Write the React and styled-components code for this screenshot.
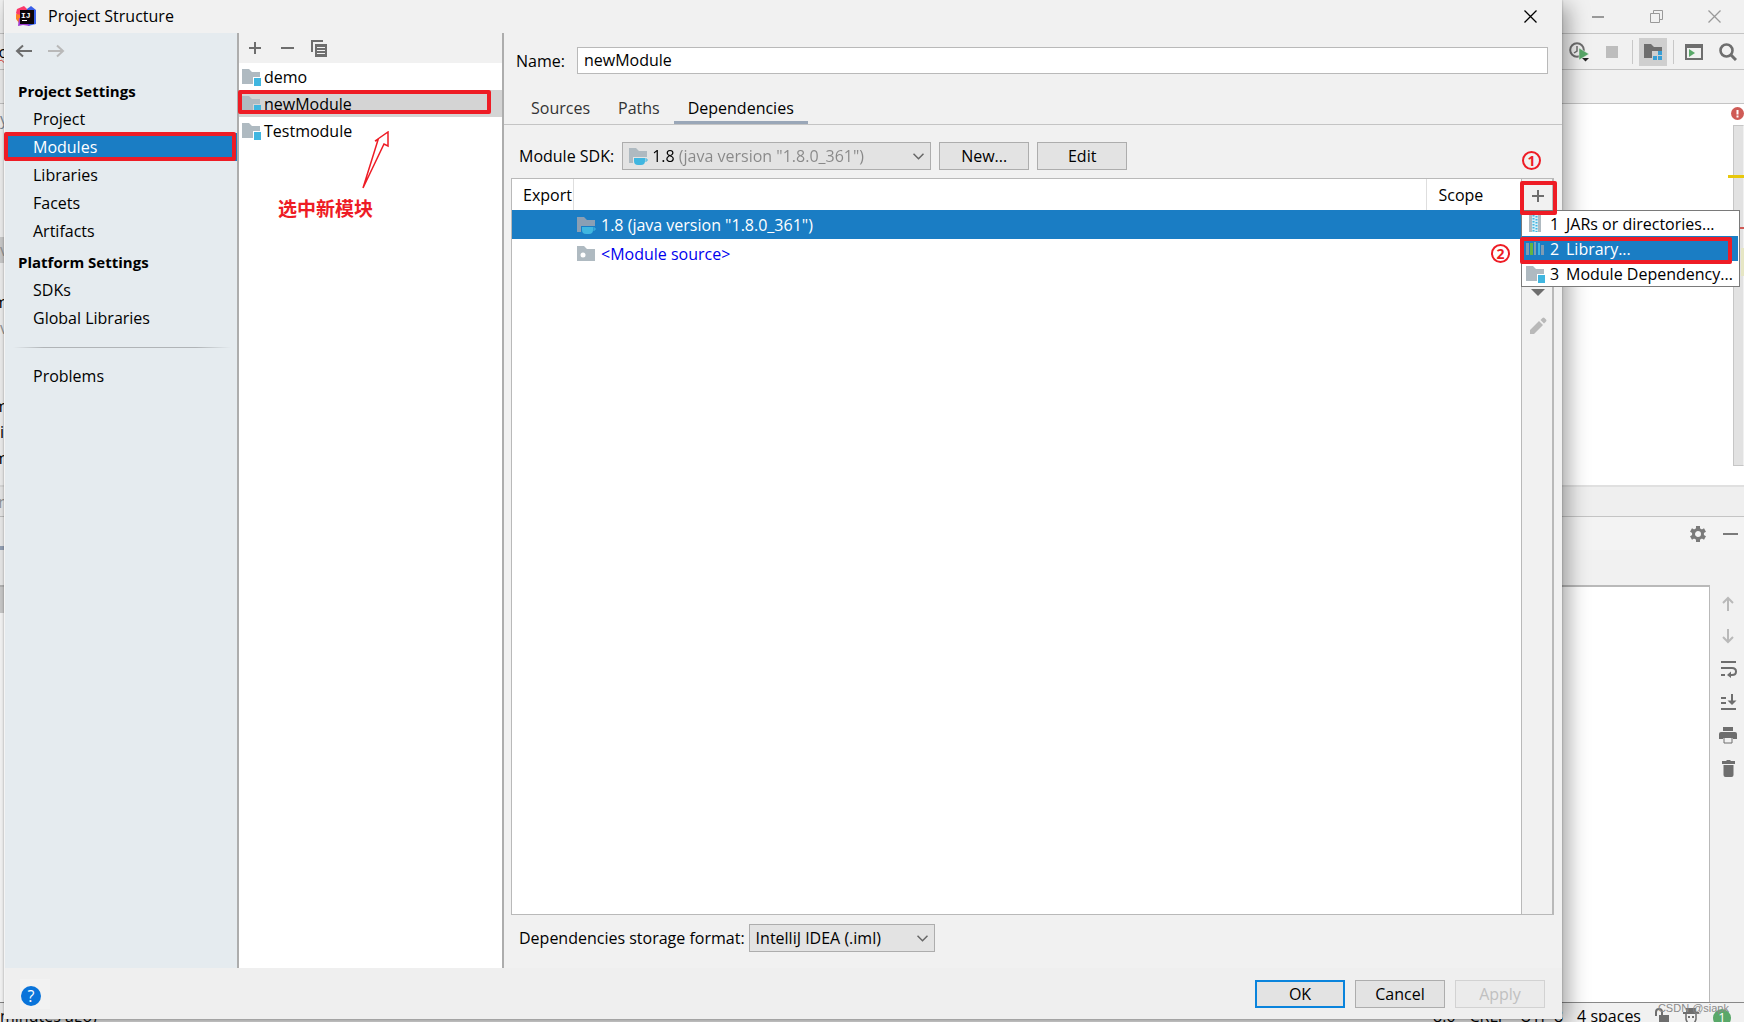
import React from "react";
import styled, { createGlobalStyle, css } from "styled-components";

const GlobalStyle = createGlobalStyle`
  * { box-sizing: border-box; }
  body {
    margin: 0;
    overflow: hidden;
    background: #f1f1f1;
    color: #000;
    font: 16px/24px "Open Sans", "Noto Sans CJK SC", sans-serif;
  }
  button, input, select { font: inherit; color: inherit; }
  ul { list-style: none; margin: 0; padding: 0; }
  svg { display: block; flex: none; }
`;

const Red = "#ee1c25";

/* ---------- IDE window behind the dialog ---------- */

const Screen = styled.div`
  position: relative;
  height: 100vh;
  overflow: hidden;
`;

const Ide = styled.div`
  display: flex;
  flex-direction: column;
  height: 100%;
`;

const Band = styled.div`
  flex: none;
  display: flex;
  align-items: center;
  justify-content: space-between;
  height: ${(p) => p.$h}px;
  background: ${(p) => p.$bg || "#f1f1f1"};
  border-bottom: ${(p) => p.$line || "1px solid #c4c4c4"};
`;

const Cluster = styled.div`
  display: flex;
  align-items: center;
  gap: ${(p) => p.$gap}px;
  padding-right: ${(p) => p.$pr}px;
`;

const Sliver = styled.span`
  display: flex;
  justify-content: ${(p) => (p.$end ? "flex-end" : "flex-start")};
  width: 8px;
  overflow: hidden;
  white-space: nowrap;
  color: ${(p) => p.$color || "#000"};
  text-decoration: ${(p) => (p.$wavy ? "underline wavy #e53935 1px" : "none")};
`;

const ToolTab = styled.span`
  align-self: stretch;
  width: 60px;
  border-bottom: 4px solid #9aa7bb;
`;

const IconButton = styled.button`
  display: flex;
  align-items: center;
  justify-content: center;
  width: ${(p) => p.$w || 20}px;
  height: ${(p) => p.$h || 20}px;
  padding: 0;
  border: 0;
  background: ${(p) => (p.$active ? "#cfcfcf" : "transparent")};
`;

const Divider = styled.span`
  width: 1px;
  height: 24px;
  background: #c8c8c8;
`;

const Editor = styled.div`
  flex: none;
  display: flex;
  justify-content: space-between;
  height: 383px;
  background: #fff;
  border-bottom: 2px solid #e0e0e0;
`;

const Tree = styled.ul`
  width: 200px;
  background: #f6f6f6;
`;

const TreeRow = styled.li`
  height: ${(p) => p.$h || 26}px;
  display: flex;
  align-items: center;
  background: ${(p) => (p.$selected ? "#d0d0d0" : "transparent")};
`;

const Gutter = styled.div`
  position: relative;
  display: flex;
  flex-direction: column;
  align-items: center;
  gap: 5px;
  width: 14px;
  padding-top: 3px;
`;

const Track = styled.div`
  align-self: stretch;
  height: 341px;
  margin: 0 0 0 3px;
  border: 1px solid #c6c6c6;
  border-right-color: #f1f1f1;
  background: #e2e2e2;
`;

const Mark = styled.span`
  position: absolute;
  right: 0;
  top: ${(p) => p.$top}px;
  width: ${(p) => p.$w}px;
  height: ${(p) => p.$h}px;
  background: ${(p) => p.$color};
`;

const Console = styled.div`
  flex: 1;
  display: flex;
  min-height: 0;
  border-bottom: 1px solid #888;
`;

const ConsolePane = styled.div`
  flex: 1;
  border: solid #b9b9b9;
  border-width: 2px 1px 0 0;
  background: #fff;
`;

const ConsoleTree = styled.div`
  width: 200px;
  height: 26px;
  background: #d0d0d0;
`;

const ConsoleTools = styled.div`
  display: flex;
  flex-direction: column;
  align-items: center;
  gap: 13px;
  width: 34px;
  padding: 8px 0 0 2px;
`;

const StatusBar = styled.footer`
  flex: none;
  display: flex;
  align-items: flex-start;
  justify-content: space-between;
  height: 19px;
  line-height: 26px;
`;

const StatusItems = styled.div`
  display: flex;
  gap: 14px;
  padding-right: 13px;
`;

const StatusText = styled.span`
  white-space: nowrap;
`;

const StatusIcon = styled.span`
  padding-top: 5px;
`;

const EventBadge = styled.span`
  width: 18px;
  height: 18px;
  margin-top: 6px;
  border-radius: 9px;
  background: #59a869;
  color: #fff;
  font-size: 13px;
  line-height: 16px;
  text-align: center;
`;

const Watermark = styled.span`
  position: absolute;
  right: 15px;
  bottom: 5px;
  color: #8b8b8b;
  font: 11px/18px "Liberation Sans", sans-serif;
`;

/* ---------- dialog ---------- */

const Dialog = styled.section`
  position: absolute;
  inset: 0 182px 3px 4px;
  display: flex;
  flex-direction: column;
  background: #f1f1f1;
  border-left: 1px solid #f4f4f4;
  box-shadow: 6px 6px 20px rgba(0, 0, 0, 0.36), 0 0 2px rgba(0, 0, 0, 0.3);
`;

const TitleBar = styled.header`
  flex: none;
  display: flex;
  align-items: center;
  gap: 11px;
  height: 33px;
  padding: 0 22px 1px 11px;
`;

const Title = styled.h1`
  flex: 1;
  margin: 0;
  font-size: 16px;
  font-weight: 400;
`;

const Body = styled.div`
  flex: 1;
  display: flex;
  min-height: 0;
`;

const Sidebar = styled.nav`
  flex: none;
  width: 234px;
  border-right: 2px solid #adadad;
  background: #e5ebef;
`;

const History = styled.div`
  display: flex;
  gap: 12px;
  height: 46px;
  padding: 8px 0 0 9px;
`;

const GroupTitle = styled.h2`
  height: 26px;
  margin: ${(p) => (p.$spaced ? 5 : 0)}px 0 0;
  padding-left: 13px;
  font-size: 15px;
  line-height: 24px;
  font-weight: 700;
`;

const NavItem = styled.li`
  position: relative;
  height: 28px;
`;

const NavLink = styled.a`
  display: block;
  padding-left: 28px;
  line-height: 28px;
  color: ${(p) => (p.$selected ? "#fff" : "#000")};
  background: ${(p) => (p.$selected ? "#1a7dc4" : "transparent")};
  text-decoration: none;
`;

const Rule = styled.hr`
  height: 1px;
  margin: 15px 6px 14px 8px;
  border: 0;
  background: linear-gradient(90deg, transparent, #b0b4b7 14%, #b0b4b7 84%, transparent);
`;

const Highlight = styled.span`
  position: absolute;
  z-index: 3;
  top: ${(p) => p.$t}px;
  right: ${(p) => p.$r}px;
  bottom: ${(p) => p.$b}px;
  left: ${(p) => p.$l}px;
  border: 4px solid ${Red};
  border-radius: 2px;
  pointer-events: none;
`;

const Modules = styled.div`
  position: relative;
  flex: none;
  width: 265px;
  border-right: 2px solid #adadad;
  background: #fff;
`;

const ModuleTools = styled.div`
  display: flex;
  gap: 12px;
  height: 30px;
  padding: 5px 0 0 6px;
  background: #f1f1f1;
`;

const ModuleRow = styled.li`
  position: relative;
  display: flex;
  align-items: center;
  gap: 2px;
  height: 27px;
  padding-left: 3px;
  background: ${(p) => (p.$selected ? "#d4d4d4" : "transparent")};
`;

const Note = styled.div`
  position: absolute;
  top: 98px;
  left: 39px;
  color: ${Red};
  font: 700 19px/28px "Noto Sans CJK SC", sans-serif;
`;

const NoteArrow = styled.svg`
  margin: 0 0 3px 83px;
`;

const Detail = styled.div`
  flex: 1;
  display: flex;
  flex-direction: column;
  min-width: 0;
`;

const NameRow = styled.div`
  display: flex;
  align-items: center;
  gap: 12px;
  padding: 14px 14px 0 12px;
`;

const TextBox = styled.input`
  flex: 1;
  min-width: 0;
  height: 27px;
  padding: 0 6px 2px;
  border: 1px solid #b9b9b9;
  background: #fff;
`;

const Tabs = styled.div`
  display: flex;
  height: 51px;
  padding: 18px 13px 0;
  border-bottom: 1px solid #c4c4c4;
`;

const Tab = styled.button`
  height: 32px;
  padding: 0 14px 1px;
  border: 0;
  background: none;
  color: ${(p) => (p.$active ? "#000" : "#333")};
  ${(p) => p.$active && css`box-shadow: inset 0 -3px #9aa7b8;`}
`;

const Row = styled.div`
  display: flex;
  align-items: center;
  gap: ${(p) => p.$gap}px;
  padding: ${(p) => p.$pad};
`;

const Combo = styled.span`
  position: relative;
  display: flex;
  align-items: center;
  gap: 3px;
  width: ${(p) => p.$w}px;
  height: 28px;
  padding: 0 6px;
  border: 1px solid #adadad;
  background: #e3e3e3;
`;

const ComboSelect = styled.select`
  appearance: none;
  flex: 1;
  min-width: 0;
  padding: 0;
  border: 0;
  background: transparent;
  ${(p) =>
    p.$twoTone &&
    css`
      color: transparent;
      background: linear-gradient(90deg, #000 24px, #888 24px);
      background-clip: text;
    `}
`;

const PushButton = styled.button`
  width: 90px;
  height: 28px;
  padding: 0;
  line-height: 24px;
  border: ${(p) => (p.$primary ? "2px solid #0a84dc" : "1px solid #adadad")};
  background: #e3e3e3;
  &:disabled {
    border-color: #d2d2d2;
    background: #ebebeb;
    color: #c0c0c0;
  }
`;

const Panel = styled.div`
  flex: 1;
  display: flex;
  min-height: 0;
  margin: 8px 8px 0 7px;
  border: 1px solid #b9b9b9;
  border-right-width: 2px;
  background: #fff;
`;

const TableArea = styled.div`
  position: relative;
  flex: 1;
`;

const Table = styled.table`
  width: 100%;
  border-collapse: collapse;
  table-layout: fixed;
`;

const Th = styled.th`
  width: ${(p) => p.$w};
  height: 31px;
  padding: 0 0 0 ${(p) => p.$pl || 0}px;
  border-right: ${(p) => (p.$last ? "0" : "1px solid #dedede")};
  font-weight: 400;
  text-align: left;
  white-space: nowrap;
`;

const Tr = styled.tr`
  height: 29px;
  color: ${(p) => (p.$selected ? "#fff" : "#0000ee")};
  background: ${(p) => (p.$selected ? "#1a7dc4" : "transparent")};
`;

const Td = styled.td`
  padding: 0 0 0 4px;
`;

const Entry = styled.span`
  display: flex;
  align-items: center;
  gap: 4px;
`;

const PanelTools = styled.div`
  position: relative;
  display: flex;
  flex-direction: column;
  align-items: center;
  width: 31px;
  border-left: 1px solid #b9b9b9;
  background: #f1f1f1;
`;

const ToolSlot = styled.div`
  position: relative;
  display: flex;
  align-items: ${(p) => p.$align || "center"};
  justify-content: center;
  width: 31px;
  height: ${(p) => p.$h}px;
  padding-left: 2px;
`;

const Popup = styled.ul`
  position: absolute;
  z-index: 2;
  top: 31px;
  left: -1px;
  width: 219px;
  border: 1px solid #7a7a7a;
  background: #fff;
`;

const PopupItem = styled.li`
  position: relative;
  height: 25px;
`;

const PopupAction = styled.button`
  display: flex;
  align-items: center;
  gap: 6px;
  width: 216px;
  height: 25px;
  padding: 0 0 0 4px;
  border: 0;
  text-align: left;
  white-space: nowrap;
  color: ${(p) => (p.$selected ? "#fff" : "#000")};
  background: ${(p) => (p.$selected ? "#1a7dc4" : "transparent")};
`;

const PopupIcon = styled.span`
  width: 18px;
`;

const Digit = styled.span`
  width: 10px;
`;

const Step = styled.span`
  position: absolute;
  z-index: 3;
  top: ${(p) => p.$top}px;
  right: ${(p) => p.$right}px;
  width: 19px;
  height: 19px;
  border: 2px solid ${Red};
  border-radius: 10px;
  color: ${Red};
  font-size: 14px;
  font-weight: 700;
  line-height: 15px;
  text-align: center;
`;

const DialogFooter = styled.footer`
  flex: none;
  display: flex;
  align-items: center;
  gap: 10px;
  height: 51px;
  padding: 0 17px 0 15px;
  background: #efefef;
`;

const HelpButton = styled.button`
  display: flex;
  align-items: center;
  width: 30px;
  height: 30px;
  margin: 0 auto 0 0;
  padding: 0;
  border: 0;
  background: #f2f2f2;
`;

const HelpMark = styled.span`
  width: 20px;
  height: 20px;
  margin: 4px 0 0 1px;
  border-radius: 10px;
  background: #0a74da;
  color: #fff;
  line-height: 20px;
  text-align: center;
`;

/* ---------- icons ---------- */

const Logo = () => (
  <svg width="21" height="21" viewBox="0 0 21 21">
    <path d="M1 3 8 0l4 4-3 9-6 4-2-4 1-3-2-3z" fill="#fb3a6a" />
    <path d="m0 8 5 1 1 7-3 1-3-4z" fill="#fd8224" />
    <path d="m11 3 4-3 5 4v14l-8 2-2-8z" fill="#3a5fe8" />
    <path d="m3 12 6 2 5 6-7-1-5 1z" fill="#a03ad0" />
    <rect x="4" y="4" width="14" height="14" fill="#0b0408" />
    <rect x="6" y="14" width="5" height="1" fill="#fff" />
    <text x="5" y="12" fill="#fff" fontSize="8" fontWeight="700" fontFamily="Liberation Mono, monospace">IJ</text>
  </svg>
);

const Arrow = ({ right, color }) => (
  <svg width="18" height="20" viewBox="0 0 18 20" fill="none" stroke={color} strokeWidth="2">
    {right ? <path d="M1 10h15M10 4.500l6 5.500-6 5.500" /> : <path d="M17 10H2M8 4.500L2 10l6 5.500" />}
  </svg>
);

const Plus = () => (
  <svg width="14" height="14" viewBox="0 0 14 14" stroke="#6e6e6e" strokeWidth="2"><path d="M7 1v12M1 7h12" /></svg>
);

const Minus = ({ w = 13, color = "#6e6e6e" }) => (
  <svg width={w} height="2"><rect width={w} height="2" fill={color} /></svg>
);

const Copy = () => (
  <svg width="16" height="17" viewBox="0 0 16 17">
    <path d="M1 12V1h11" fill="none" stroke="#6e6e6e" strokeWidth="2" />
    <path d="M4 4h12v13H4z" fill="#6e6e6e" />
    <path d="M6 7.500h8M6 10.500h8M6 13.500h8" stroke="#f1f1f1" />
  </svg>
);

const Folder = ({ kind, fill = "#afbac1", gap = "#fff" }) => (
  <svg width="20" height="18" viewBox="0 0 20 18">
    <path d="M0 1h7l3 3h8v12H0z" fill={fill} />
    {kind === "module" && <><path d="M11 9h8v8h-8z" fill={gap} /><path d="M12 10h7v8h-7z" fill="#40b6e0" /></>}
    {kind === "sdk" && <>
      <path d="M4 10h15v6H4z" fill={gap} />
      <path d="M5 11h11v3q0 4-4 4H9q-4 0-4-4z" fill="#40b6e0" />
      <path d="M15 12h3v2h-3" fill="none" stroke="#40b6e0" />
    </>}
    {kind === "source" && <circle cx="6" cy="10" r="2.500" fill="#fff" />}
  </svg>
);

const Chevron = () => (
  <svg width="11" height="7" viewBox="0 0 11 7" fill="none" stroke="#666" strokeWidth="1.500"><path d="m.5.8 5 5 5-5" /></svg>
);

const CloseX = ({ color }) => (
  <svg width="13" height="13" viewBox="0 0 13 13" stroke={color} strokeWidth="1.300"><path d="m.5.5 12 12m0-12-12 12" /></svg>
);

const Jar = () => (
  <svg width="18" height="17" viewBox="0 0 18 17">
    <path d="M3 0h3v17H3zM12 0h3v17h-3z" fill="#afbac1" />
    <path d="M6 0h6v17H6z" fill="#d5eef8" />
    <path d="M7.500 0v17M10.500 1v16" stroke="#40b6e0" strokeWidth="2" strokeDasharray="1.500 1.500" />
  </svg>
);

const Library = () => (
  <svg width="18" height="14" viewBox="0 0 18 14">
    <path d="M0 1h3v12H0zM8 0h2v13H8zM15 3h3v10h-3z" fill="#7d9bb3" />
    <path d="M4 1h3v12H4z" fill="#62b543" />
    <path d="M12 1h2v12h-2z" fill="#40b6e0" />
  </svg>
);

const moduleList = [{ name: "demo" }, { name: "newModule", selected: true }, { name: "Testmodule" }];

const treeRows = [
  {}, {}, {}, {},
  { text: "v", color: "#999", selected: true },
  {},
  { text: "m", end: true },
  { text: "v", color: "#999" },
  {}, {},
  { text: "m", end: true },
  { text: "i" },
  { text: "m", end: true },
];

function IdeWindow() {
  return (
    <Ide>
      <Band $h={34}>
        <span />
        <Cluster $gap={38} $pr={20}>
          <IconButton aria-label="Minimize"><Minus w={12} color="#999" /></IconButton>
          <IconButton aria-label="Restore">
            <svg width="13" height="13" viewBox="0 0 13 13" fill="none" stroke="#999"><path d="M.5 3.500h9v9h-9zM3.500 3V.5h9v9H10" /></svg>
          </IconButton>
          <IconButton aria-label="Close window"><CloseX color="#999" /></IconButton>
        </Cluster>
      </Band>
      <Band $h={36}>
        <Sliver $wavy $end>pro</Sliver>
        <Cluster $gap={6} $pr={2}>
          <IconButton $w={26} aria-label="Run with profiler">
            <svg width="20" height="20" viewBox="0 0 20 20">
              <circle cx="8" cy="8" r="6.800" fill="none" stroke="#6e6e6e" strokeWidth="2" />
              <path d="M8 4v5l-3 2" fill="none" stroke="#6e6e6e" strokeWidth="1.500" />
              <path d="M10 6l10 6-10 6z" fill="#59a869" stroke="#f1f1f1" strokeWidth="0.500" />
              <path d="M13 16h7l-3.500 3.500z" fill="#222" />
            </svg>
          </IconButton>
          <IconButton $w={28} aria-label="Stop"><svg width="12" height="12"><rect width="12" height="12" fill="#bdbdbd" /></svg></IconButton>
          <Divider />
          <IconButton $w={28} $h={28} $active aria-label="Project structure">
            <svg width="18" height="16" viewBox="0 0 18 16">
              <path d="M0 0h7l3 3h8v4H8v7H0z" fill="#6e6e6e" />
              <path d="M14 7h4v4h-4zM9 12h4v4H9zM14 12h4v4h-4z" fill="#389fd6" />
            </svg>
          </IconButton>
          <Divider />
          <IconButton $w={28} aria-label="Run anything">
            <svg width="18" height="16" viewBox="0 0 18 16">
              <path d="M1 1h16v14H1z" fill="none" stroke="#6e6e6e" strokeWidth="2" />
              <path d="M0 0h18v4H0z" fill="#6e6e6e" /><path d="m4 5 6 4-6 4z" fill="#59a869" />
            </svg>
          </IconButton>
          <IconButton $w={28} aria-label="Search">
            <svg width="18" height="18" viewBox="0 0 18 18" fill="none" stroke="#6e6e6e"><circle cx="7.500" cy="7.500" r="6" strokeWidth="2.600" /><path d="m12 12 5 5" strokeWidth="3" /></svg>
          </IconButton>
        </Cluster>
      </Band>
      <Band $h={34} />
      <Editor>
        <Tree>
          <TreeRow $h={29}><Sliver $color="#7f8b99">y</Sliver></TreeRow>
          {treeRows.map((r, i) => (
            <TreeRow key={i} $selected={r.selected}>
              {r.text && <Sliver $color={r.color} $end={r.end}>{r.text}</Sliver>}
            </TreeRow>
          ))}
        </Tree>
        <Gutter>
          <svg width="13" height="13" viewBox="0 0 13 13"><circle cx="6.500" cy="6.500" r="6.500" fill="#cf5b56" /><path d="M6.500 3v4.500M6.500 8.500v2" stroke="#fff" strokeWidth="2" /></svg>
          <Track />
          <Mark $top={71} $w={16} $h={3} $color="#e8c80c" />
          <Mark $top={123} $w={4} $h={2} $color="#cf5b56" />
          <Mark $top={144} $w={3} $h={28} $color="#e6e6c4" />
        </Gutter>
      </Editor>
      <Band $h={30} $bg="#efefef"><Sliver $color="#999" $end>n</Sliver></Band>
      <Band $h={33} $bg="#f3f3f3" $line="0">
        <ToolTab />
        <Cluster $gap={16} $pr={6}>
          <IconButton $w={16} aria-label="Options">
            <svg width="16" height="16" viewBox="0 0 16 16" fill="none" stroke="#7a7a7a">
              <circle cx="8" cy="8" r="4.500" strokeWidth="3" />
              <path d="M8 0v3M8 13v3M1 4l3 1.700M12 10.300 15 12M1 12l3-1.700M12 5.700 15 4" strokeWidth="4" />
            </svg>
          </IconButton>
          <IconButton $w={16} aria-label="Hide"><Minus w={15} color="#7a7a7a" /></IconButton>
        </Cluster>
      </Band>
      <Band $h={35} $line="0" />
      <Console>
        <ConsolePane><ConsoleTree /></ConsolePane>
        <ConsoleTools>
          <IconButton aria-label="Previous"><svg width="12" height="15" viewBox="0 0 12 15" fill="none" stroke="#b9b9b9" strokeWidth="2"><path d="M6 15V2M1 7l5-5 5 5" /></svg></IconButton>
          <IconButton aria-label="Next"><svg width="12" height="15" viewBox="0 0 12 15" fill="none" stroke="#b9b9b9" strokeWidth="2"><path d="M6 0v13M1 8l5 5 5-5" /></svg></IconButton>
          <IconButton aria-label="Soft wrap">
            <svg width="17" height="17" viewBox="0 0 17 17" fill="none" stroke="#6e6e6e" strokeWidth="2"><path d="M1 1h15M1 7h11q4 0 4 3.500T12 14h-1M1 14h4" /><path d="m7 14 4-3.500v6.500z" fill="#6e6e6e" stroke="none" /></svg>
          </IconButton>
          <IconButton aria-label="Scroll to end">
            <svg width="17" height="16" viewBox="0 0 17 16" fill="none" stroke="#6e6e6e" strokeWidth="2"><path d="M1 4h5M1 9h5M1 15h15M12 0v7" /><path d="M7.500 6.500h9L12 11z" fill="#6e6e6e" stroke="none" /></svg>
          </IconButton>
          <IconButton aria-label="Print">
            <svg width="18" height="17" viewBox="0 0 18 17" fill="#6e6e6e"><path d="M4 0h10v4H4zM2 5h14q2 0 2 2v5h-4v-1H4v1H0V7q0-2 2-2z" /><path d="M5 11v5h8v-5" fill="#f1f1f1" stroke="#6e6e6e" /></svg>
          </IconButton>
          <IconButton aria-label="Clear">
            <svg width="13" height="17" viewBox="0 0 13 17" fill="#6e6e6e"><path d="M0 1h4l1-1h3l1 1h4v3H0zM1.500 5h10v10q0 2-2 2h-6q-2 0-2-2z" /></svg>
          </IconButton>
        </ConsoleTools>
      </Console>
      <StatusBar>
        <StatusText>minutes ago)</StatusText>
        <StatusItems>
          <StatusText>8:6</StatusText>
          <StatusText>CRLF</StatusText>
          <StatusText>UTF-8</StatusText>
          <StatusText>4 spaces</StatusText>
          <StatusIcon>
            <svg width="14" height="15" viewBox="0 0 14 15"><path d="M1 8V4q0-3 3-3t3 3v4" fill="none" stroke="#6e6e6e" strokeWidth="2" /><path d="M4 7h10v8H4z" fill="#6e6e6e" /></svg>
          </StatusIcon>
          <StatusIcon>
            <svg width="16" height="16" viewBox="0 0 16 16"><path d="M3 0h10v4h3v2H0V4h3z" fill="#6e6e6e" /><path d="M3 6v5q1 5 5 5t5-5V6" fill="none" stroke="#6e6e6e" strokeWidth="1.500" /><path d="M5 8h2v2H5zM9 8h2v2H9z" fill="#6e6e6e" /></svg>
          </StatusIcon>
          <EventBadge>1</EventBadge>
        </StatusItems>
      </StatusBar>
    </Ide>
  );
}

function SettingsNav() {
  const item = (name, selected) => (
    <NavItem key={name}>
      <NavLink href="#" $selected={selected}>{name}</NavLink>
      {selected && <Highlight $t={-1} $r={1} $b={0} $l={-1} />}
    </NavItem>
  );
  return (
    <Sidebar>
      <History>
        <IconButton aria-label="Back"><Arrow color="#6e6e6e" /></IconButton>
        <IconButton aria-label="Forward"><Arrow right color="#b9b9b9" /></IconButton>
      </History>
      <GroupTitle>Project Settings</GroupTitle>
      <ul>{["Project", "Modules", "Libraries", "Facets", "Artifacts"].map((n) => item(n, n === "Modules"))}</ul>
      <GroupTitle $spaced>Platform Settings</GroupTitle>
      <ul>{["SDKs", "Global Libraries"].map((n) => item(n))}</ul>
      <Rule />
      <ul>{item("Problems")}</ul>
    </Sidebar>
  );
}

function ModulePane() {
  return (
    <Modules>
      <ModuleTools>
        <IconButton aria-label="Add module"><Plus /></IconButton>
        <IconButton aria-label="Remove module"><Minus /></IconButton>
        <IconButton aria-label="Copy module"><Copy /></IconButton>
      </ModuleTools>
      <ul>
        {moduleList.map((m) => (
          <ModuleRow key={m.name} $selected={m.selected}>
            <Folder kind="module" gap={m.selected ? "#d4d4d4" : "#fff"} />
            {m.name}
            {m.selected && <Highlight $t={0} $r={11} $b={3} $l={-1} />}
          </ModuleRow>
        ))}
      </ul>
      <Note>
        <NoteArrow width="30" height="60" viewBox="0 0 30 60" fill="none" stroke={Red} strokeWidth="1.500">
          <path d="M2 57 17 9l-3 1L27 1v14l-4-2z" />
        </NoteArrow>
        选中新模块
      </Note>
    </Modules>
  );
}

function AddMenu() {
  const items = [
    { n: 1, label: "JARs or directories...", icon: <Jar /> },
    { n: 2, label: "Library...", icon: <Library />, selected: true },
    { n: 3, label: "Module Dependency...", icon: <Folder kind="module" /> },
  ];
  return (
    <Popup>
      {items.map((i) => (
        <PopupItem key={i.n}>
          <PopupAction $selected={i.selected}>
            <PopupIcon>{i.icon}</PopupIcon>
            <Digit>{i.n}</Digit>
            {i.label}
          </PopupAction>
          {i.selected && <Highlight $t={1} $r={7} $b={-3} $l={-2} />}
        </PopupItem>
      ))}
    </Popup>
  );
}

export default function App() {
  return (
    <Screen>
      <GlobalStyle />
      <IdeWindow />
      <Dialog aria-label="Project Structure">
        <TitleBar>
          <Logo />
          <Title>Project Structure</Title>
          <IconButton aria-label="Close"><CloseX color="#000" /></IconButton>
        </TitleBar>
        <Body>
          <SettingsNav />
          <ModulePane />
          <Detail>
            <NameRow>
              <label htmlFor="name">Name:</label>
              <TextBox id="name" defaultValue="newModule" />
            </NameRow>
            <Tabs>
              <Tab>Sources</Tab>
              <Tab>Paths</Tab>
              <Tab $active>Dependencies</Tab>
            </Tabs>
            <Row $gap={8} $pad="17px 0 0 15px">
              <label htmlFor="sdk">Module SDK:</label>
              <Combo $w={309}>
                <Folder kind="sdk" gap="#e3e3e3" />
                <ComboSelect id="sdk" $twoTone><option>1.8 (java version "1.8.0_361")</option></ComboSelect>
                <Chevron />
              </Combo>
              <PushButton>New...</PushButton>
              <PushButton>Edit</PushButton>
            </Row>
            <Panel>
              <TableArea>
                <Table>
                  <thead>
                    <tr><Th $w="61px" $pl={11}>Export</Th><Th /><Th $w="95px" $pl={12} $last>Scope</Th></tr>
                  </thead>
                  <tbody>
                    <Tr $selected>
                      <Td />
                      <Td colSpan={2}><Entry><Folder kind="sdk" fill="#8a9fb4" gap="#1a7dc4" />1.8 (java version "1.8.0_361")</Entry></Td>
                    </Tr>
                    <Tr>
                      <Td />
                      <Td colSpan={2}><Entry><Folder kind="source" />&lt;Module source&gt;</Entry></Td>
                    </Tr>
                  </tbody>
                </Table>
                <Step $top={65} $right={11}>2</Step>
              </TableArea>
              <PanelTools>
                <Step $top={-28} $right={11}>1</Step>
                <ToolSlot $h={34}>
                  <IconButton aria-label="Add dependency"><Plus /></IconButton>
                  <Highlight $t={2} $r={-4} $b={-2} $l={-2} />
                </ToolSlot>
                <AddMenu />
                <ToolSlot $h={86} $align="flex-end">
                  <IconButton $h={14} aria-label="Move down"><svg width="14" height="7"><path d="M0 0h14L7 7z" fill="#6e6e6e" /></svg></IconButton>
                </ToolSlot>
                <ToolSlot $h={53}>
                  <IconButton aria-label="Edit dependency">
                    <svg width="17" height="17" viewBox="0 0 17 17" fill="#b9b9b9"><path d="M0 17v-4l9-9 4 4-9 9zM10.500 3l2-2q1-1 2 0L16 2.500q1 1 0 2l-2 2z" /></svg>
                  </IconButton>
                </ToolSlot>
              </PanelTools>
            </Panel>
            <Row $gap={4} $pad="9px 0 16px 15px">
              <label htmlFor="format">Dependencies storage format:</label>
              <Combo $w={186}>
                <ComboSelect id="format"><option>IntelliJ IDEA (.iml)</option></ComboSelect>
                <Chevron />
              </Combo>
            </Row>
          </Detail>
        </Body>
        <DialogFooter>
          <HelpButton aria-label="Help"><HelpMark>?</HelpMark></HelpButton>
          <PushButton $primary>OK</PushButton>
          <PushButton>Cancel</PushButton>
          <PushButton disabled>Apply</PushButton>
        </DialogFooter>
      </Dialog>
      <Watermark>CSDN @siapk</Watermark>
    </Screen>
  );
}
